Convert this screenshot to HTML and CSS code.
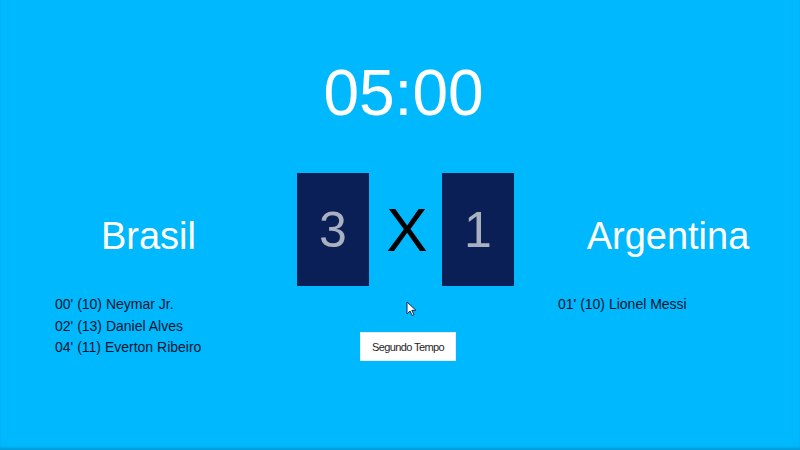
FILE: index.html
```html
<!DOCTYPE html>
<html lang="pt">
<head>
<meta charset="utf-8">
<title>Placar</title>
<link rel="stylesheet" href="styles.css">
</head>
<body>
<div class="app">
  <div class="timer">05:00</div>
  <div class="board">
    <div class="team-name team-left">Brasil</div>
    <div class="score">
      <div class="score-box">3</div>
      <div class="versus">X</div>
      <div class="score-box">1</div>
    </div>
    <div class="team-name team-right">Argentina</div>
    <ul class="goals goals-left">
      <li>00' (10) Neymar Jr.</li>
      <li>02' (13) Daniel Alves</li>
      <li>04' (11) Everton Ribeiro</li>
    </ul>
    <div class="actions">
      <button class="btn" type="button">Segundo Tempo</button>
    </div>
    <ul class="goals goals-right">
      <li>01' (10) Lionel Messi</li>
    </ul>
  </div>
  <svg class="cursor" width="11" height="16" viewBox="0 0 11 16"><path d="M1 1 L1 13 L4 10 L6.2 14.5 L8 13.7 L5.9 9.3 L10 9.3 Z" fill="#ffffff" stroke="#0a2a50" stroke-width="1" stroke-linejoin="round"/></svg>
</div>
</body>
</html>
```
FILE: styles.css
```css
html, body {
  margin: 0;
  padding: 0;
}
body {
  background: #00b8fd;
  font-family: "Liberation Sans", Arial, sans-serif;
}
.app {
  position: relative;
  height: 450px;
  display: flex;
  flex-direction: column;
  box-shadow: inset 0 -3px 3px -1px rgba(0, 60, 110, 0.25);
  box-sizing: border-box;
}
.timer {
  margin-top: 61px;
  padding-left: 7px;
  color: #ffffff;
  font-size: 64px;
  line-height: 64px;
  text-align: center;
}
.board {
  margin-top: 48px;
  display: grid;
  grid-template-columns: 297px 217px 1fr;
  grid-template-rows: 113px auto;
}
.team-name {
  color: #ffffff;
  font-size: 38px;
  line-height: 44px;
  padding-top: 41px;
  text-align: center;
}
.team-right {
  padding-left: 22px;
}
.score {
  display: flex;
}
.score-box {
  width: 72px;
  height: 113px;
  background: #0b1f57;
  color: #a9b1c1;
  font-size: 50px;
  display: flex;
  align-items: center;
  justify-content: center;
}
.versus {
  width: 73px;
  display: flex;
  align-items: center;
  justify-content: center;
  color: #000000;
  font-size: 62px;
  padding-left: 3px;
  box-sizing: border-box;
}
.goals {
  list-style: none;
  margin: 0;
  padding: 8px 0 0 55px;
  color: #04152e;
  font-size: 14px;
  line-height: 21.5px;
}
.goals-right {
  padding-left: 44px;
}
.actions {
  padding-top: 46px;
  padding-left: 63px;
}
.btn {
  width: 96px;
  height: 29px;
  border: 1px solid #e6ecef;
  background: #ffffff;
  color: #1e1e1e;
  font-family: "Liberation Sans", Arial, sans-serif;
  font-size: 11px;
  letter-spacing: -0.6px;
  padding: 0;
}
.cursor {
  position: absolute;
  left: 406px;
  top: 301px;
}
```
